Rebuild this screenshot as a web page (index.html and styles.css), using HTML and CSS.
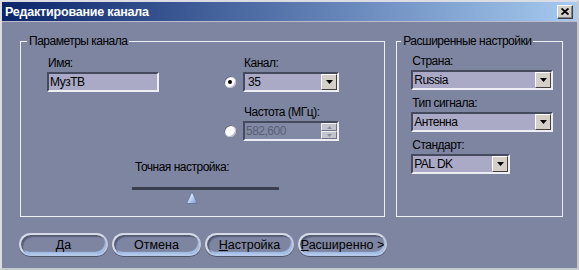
FILE: index.html
```html
<!DOCTYPE html>
<html lang="ru">
  <head>
    <meta charset="UTF-8" />
    <title>Редактирование канала</title>
    <link rel="stylesheet" href="styles.css">
  </head>
  <body>
    <div class="window">
      <div class="titlebar">
        <span class="title">Редактирование канала</span>
        <button class="close" type="button">
          <svg width="8" height="7" viewBox="0 0 8 7">
            <path d="M0.5 0.5L7.5 6.5M7.5 0.5L0.5 6.5" stroke="#000" stroke-width="1.8" />
          </svg>
        </button>
      </div>

      <div class="content">
        <div class="groups">
          <fieldset class="group group-main">
            <legend>Параметры канала</legend>
            <div class="main">
              <div class="name-col">
                <div class="lbl">Имя:</div>
                <div class="input">МузТВ</div>
              </div>
              <div class="tune">
                <div class="lbl">Канал:</div>
                <span class="radio checked"></span>
                <div class="combo channel">
                  <span class="val">35</span>
                  <span class="arrow">
                    <svg width="7" height="4" viewBox="0 0 7 4"><path d="M0 0h7L3.5 4z" /></svg>
                  </span>
                </div>
                <div class="lbl lbl-freq">Частота (МГц):</div>
                <span class="radio"></span>
                <div class="spin">
                  <span class="val">582,600</span>
                  <span class="spin-btns">
                    <span class="spin-btn">
                      <svg width="5" height="3" viewBox="0 0 5 3"><path d="M2.5 0L5 3H0z" /></svg>
                    </span>
                    <span class="spin-btn">
                      <svg width="5" height="3" viewBox="0 0 5 3"><path d="M0 0h5L2.5 3z" /></svg>
                    </span>
                  </span>
                </div>
              </div>
            </div>
            <div class="fine">
              <div class="lbl">Точная настройка:</div>
              <div class="track"></div>
              <svg class="thumb" width="12" height="13" viewBox="0 0 12 13">
                <defs>
                  <linearGradient id="thumbFill" x1="0" y1="0" x2="1" y2="1">
                    <stop offset="0" stop-color="#ffffff" />
                    <stop offset="0.5" stop-color="#c4d4f0" />
                    <stop offset="1" stop-color="#7890c0" />
                  </linearGradient>
                </defs>
                <path d="M6 0.5L11.5 12.5H0.5z" fill="url(#thumbFill)" stroke="#6a78a0" stroke-width="1" />
              </svg>
            </div>
          </fieldset>

          <fieldset class="group group-ext">
            <legend>Расширенные настройки</legend>
            <div class="ext">
              <div class="field">
                <div class="lbl">Страна:</div>
                <div class="combo wide">
                  <span class="val">Russia</span>
                  <span class="arrow">
                    <svg width="7" height="4" viewBox="0 0 7 4"><path d="M0 0h7L3.5 4z" /></svg>
                  </span>
                </div>
              </div>
              <div class="field">
                <div class="lbl">Тип сигнала:</div>
                <div class="combo wide">
                  <span class="val">Антенна</span>
                  <span class="arrow">
                    <svg width="7" height="4" viewBox="0 0 7 4"><path d="M0 0h7L3.5 4z" /></svg>
                  </span>
                </div>
              </div>
              <div class="field">
                <div class="lbl">Стандарт:</div>
                <div class="combo std">
                  <span class="val">PAL DK</span>
                  <span class="arrow">
                    <svg width="7" height="4" viewBox="0 0 7 4"><path d="M0 0h7L3.5 4z" /></svg>
                  </span>
                </div>
              </div>
            </div>
          </fieldset>
        </div>

        <div class="buttons">
          <button type="button">Да</button>
          <button type="button">Отмена</button>
          <button type="button"><u>Н</u>астройка</button>
          <button type="button"><u>Р</u>асширенно &gt;</button>
        </div>
      </div>
    </div>
  </body>
</html>
```

FILE: styles.css
```css
* {
  box-sizing: border-box;
}

body {
  margin: 0;
  font-family: "Liberation Sans", Arial, sans-serif;
  font-size: 12px;
  letter-spacing: -0.5px;
  color: #000;
  background-color: #7d85a1;
}

.window {
  width: 579px;
  height: 270px;
  background-color: #7d85a1;
  border: 2px solid;
  border-color: #dcdce4 #c8c8d0 #c8c8d0 #dcdce4;
  display: flex;
  flex-direction: column;
}

/* title bar */
.titlebar {
  height: 20px;
  flex-shrink: 0;
  display: flex;
  align-items: center;
  justify-content: space-between;
  padding: 0 4px 0 3px;
  background: linear-gradient(to right, #0a246a, #a6caf0);
  border-bottom: 1px solid #b8bccc;
}

.title {
  color: #fff;
  font-weight: bold;
  font-size: 12.5px;
  letter-spacing: -0.2px;
}

.close {
  width: 16px;
  height: 14px;
  padding: 0;
  background-color: #d4d0c8;
  border: 1px solid;
  border-color: #fff #404040 #404040 #fff;
  box-shadow: inset -1px -1px 0 #808080;
  display: flex;
  align-items: center;
  justify-content: center;
}

.content {
  padding: 12px 14px 0 18px;
}

.groups {
  display: flex;
  gap: 11px;
}

/* group boxes */
.group {
  margin: 0;
  padding: 0;
  min-width: 0;
  height: 183px;
  border: 1px solid #eef0f6;
}

.group legend {
  padding: 0 2px;
  line-height: 14px;
}

.group-main {
  width: 368px;
}

.group-main legend {
  margin-left: 6px;
}

.group-ext {
  width: 168px;
}

.group-ext legend {
  margin-left: 4px;
}

.lbl {
  line-height: 14px;
  margin-bottom: 2px;
  padding-left: 1px;
}

.main {
  display: flex;
  padding: 8px 0 0 26px;
}

.name-col {
  width: 112px;
}

.input {
  height: 20px;
  padding-left: 1px;
  line-height: 16px;
  background-color: #aaaac6;
  border: 2px solid;
  border-color: #454a5e #eceef4 #eceef4 #454a5e;
}

.tune {
  margin-left: 65px;
  display: grid;
  grid-template-columns: 12px 96px;
  column-gap: 7px;
  align-items: center;
}

.tune .lbl {
  grid-column: 2;
}

.tune .lbl-freq {
  margin-top: 13px;
}

/* radio buttons */
.radio {
  width: 12px;
  height: 12px;
  border-radius: 50%;
  background: radial-gradient(circle at 60% 60%, #ffffff 45%, #c8cad6 100%);
  box-shadow: inset 1px 1px 0 #5e6278, inset -1px -1px 0 #b8bac8;
  display: flex;
  align-items: center;
  justify-content: center;
}

.radio.checked::after {
  content: "";
  width: 4px;
  height: 4px;
  border-radius: 50%;
  background-color: #000;
}

/* combo boxes */
.combo,
.spin {
  height: 20px;
  display: flex;
  border: 2px solid;
  border-color: #454a5e #eceef4 #eceef4 #454a5e;
}

.combo {
  background-color: #aaaac6;
}

.combo .val,
.spin .val {
  flex: 1;
  padding-left: 1px;
  line-height: 16px;
  white-space: nowrap;
}

.combo.channel .val {
  padding-left: 3px;
}

.arrow {
  width: 16px;
  height: 16px;
  background-color: #d4d0c8;
  border: 1px solid;
  border-color: #fff #404040 #404040 #fff;
  display: flex;
  align-items: center;
  justify-content: center;
}

.combo.wide {
  width: 142px;
}

.combo.std {
  width: 99px;
}

/* spin box (disabled) */
.spin {
  background-color: #8189a5;
  color: #5a5f76;
}

.spin-btns {
  width: 16px;
  display: flex;
  flex-direction: column;
}

.spin-btn {
  height: 8px;
  background-color: #c4c4cc;
  border: 1px solid;
  border-color: #f0f0f0 #70748a #70748a #f0f0f0;
  display: flex;
  align-items: center;
  justify-content: center;
  fill: #8a8ea0;
}

/* slider */
.fine {
  margin: 19px 0 0 111px;
  width: 147px;
}

.fine .lbl {
  padding-left: 3px;
  margin-bottom: 13px;
}

.track {
  height: 3px;
  background-color: #3a3e50;
}

.thumb {
  display: block;
  margin: 1px 0 0 54px;
}

.ext {
  padding: 6px 0 0 14px;
}

.field + .field {
  margin-top: 6px;
}

/* bottom buttons */
.buttons {
  display: flex;
  gap: 4px;
  margin: 16px 0 0 -1px;
}

.buttons button {
  width: 89px;
  height: 23px;
  padding: 0;
  font-family: "Liberation Sans", Arial, sans-serif;
  font-size: 12.5px;
  letter-spacing: 0;
  color: #000;
  background-color: #7d85a1;
  border: 2px solid;
  border-color: #d6dae6 #c0c8dc #b4c8ea #d6dae6;
  border-radius: 12px;
  box-shadow: inset 2px 2px 1px #565c74, inset -1px -2px 1px #a8c2ea, 0 1px 0 #4e546a;
  white-space: nowrap;
  overflow: visible;
}
```
